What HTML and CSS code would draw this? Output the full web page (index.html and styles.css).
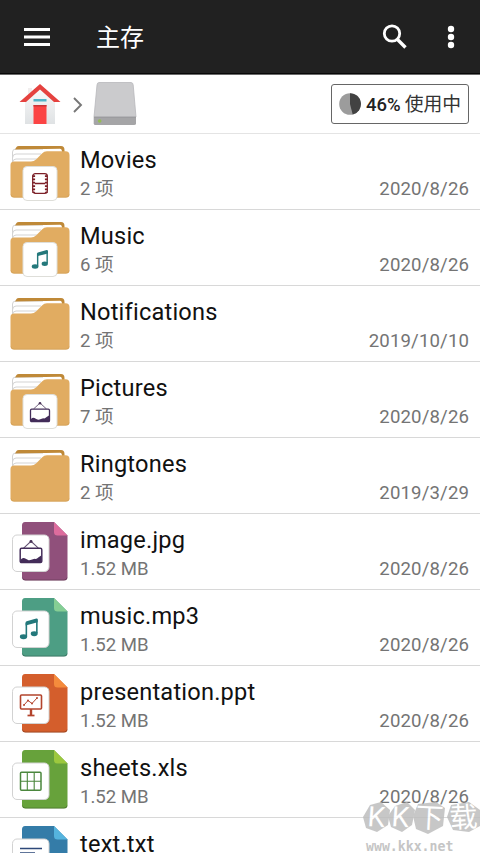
FILE: index.html
```html
<!DOCTYPE html>
<html lang="zh-CN">
<head>
<meta charset="utf-8">
<title>主存</title>
<link rel="stylesheet" href="styles.css">
</head>
<body>
<svg class="defs" width="0" height="0" aria-hidden="true">
  <symbol id="folder" viewBox="0 0 80 76">
    <path d="M14 14H60Q62 14 62 17V35H12V17Q12 14 14 14Z" fill="#fff"/>
    <path d="M12.500 31V18Q12.500 15 16 15H43M12.500 24Q12.500 20 16 20H41M12.500 29Q12.500 25 16 25H37" fill="none" stroke="#d3d3d3"/>
    <path d="M15 15.500 16.500 13Q17 12 19 12H61Q64.500 12 64.500 16V18H62V17Q61.500 14.800 60 14.800Z" fill="#bf8938"/>
    <path d="M10.500 31Q10.500 27.500 14 27.500H31Q34 27.500 36 25.500L42 19.500Q44 17.300 47 17.300H65.500Q69.500 17.300 69.500 21.300V60Q69.500 63.500 66 63.500H14Q10.500 63.500 10.500 60Z" fill="#e1ac61"/>
    <path d="M11 60.500Q11.500 63.200 14 63.200H66Q69 63.200 69.200 60.500" fill="none" stroke="#cf9c52" stroke-width=".6"/>
  </symbol>
  <symbol id="doc" viewBox="0 0 80 76">
    <path d="M25 8H54L67.500 21.500V63Q67.500 66.500 64 66.500H25.500Q22 66.500 22 63V11.500Q22 8 25 8Z" fill="currentColor"/>
    <path d="M22.300 63.500Q22.800 66.100 25.500 66.100H64Q66.800 66.100 67.200 63.500" fill="none" stroke="#000" stroke-opacity=".28" stroke-width=".9"/>
    <rect x="12.500" y="21" width="36.500" height="36.500" rx="4.500" fill="#fff" stroke="#d2d2d2"/>
  </symbol>
  <symbol id="badge" viewBox="0 0 80 76">
    <rect x="23" y="32.500" width="34" height="34" rx="4" fill="#fff" stroke="#deded9"/>
  </symbol>
  <symbol id="film" viewBox="0 0 20 22">
    <rect x="3" y="1.500" width="14" height="19" rx="2.500" fill="none" stroke="#7c2028" stroke-width="1.200"/>
    <path d="M5 11H15" stroke="#7c2028" stroke-width="1.200"/>
    <path d="M4 3V20M16 3V20" stroke="#7c2028" stroke-width="2.600" stroke-dasharray="1.700 1.500"/>
  </symbol>
  <symbol id="note" viewBox="0 0 20 22">
    <path d="M7 18V5M17 2V15" fill="none" stroke="#23787b" stroke-width="1.500"/>
    <path d="M6.300 5Q6.300 4 7.300 3.700L16.500 1Q17.800.800 17.800 2V4.600L6.300 7.600Z" fill="#23787b"/>
    <ellipse cx="4.300" cy="18.400" rx="3.500" ry="2.300" fill="#23787b"/>
    <ellipse cx="14.500" cy="15.500" rx="3.300" ry="2.300" fill="#23787b"/>
  </symbol>
  <symbol id="picture" viewBox="0 0 22 22">
    <path d="M4.500 8 11 2 17.500 8" fill="none" stroke="#625071" stroke-width=".9"/>
    <circle cx="11" cy="2.200" r="1.300" fill="#483257"/>
    <rect x="1.500" y="8.200" width="19" height="12.500" rx="1.200" fill="#fff" stroke="#432c59" stroke-width="1.300"/>
    <path d="M2 18Q3.500 16 5.500 17T8.500 18.500 12 18 15 17.500 18 15.800L20 14.500V20.500H2Z" fill="#432c59"/>
  </symbol>
</svg>

<header class="bar">
  <svg class="menu" viewBox="0 0 26 18"><path d="M0 1.500H26M0 9H26M0 16.500H26" stroke="#fff" stroke-width="2.900"/></svg>
  <h1 class="title">主存</h1>
  <svg class="search" viewBox="0 0 26 26"><circle cx="11" cy="9.500" r="7.700" fill="none" stroke="#fff" stroke-width="2.800"/><path d="M16.500 15.500 24.500 23.500" stroke="#fff" stroke-width="3.300"/></svg>
  <svg class="more" viewBox="0 0 8 24"><g fill="#fff"><circle cx="4" cy="4" r="3.200"/><circle cx="4" cy="12" r="3.200"/><circle cx="4" cy="20" r="3.200"/></g></svg>
</header>

<nav class="crumbs">
  <svg class="home" viewBox="0 0 42 42">
    <defs><linearGradient id="wall" x2="0" y2="1"><stop stop-color="#fafafa"/><stop offset="1" stop-color="#dfe2e4"/></linearGradient></defs>
    <path d="M9 5H13V14H9Z" fill="#f1eeee"/>
    <path d="M6 17 21 4 36 17V41H6Z" fill="url(#wall)"/>
    <path d="M21 1 41.500 19H35L21 6.500 7 19H.5Z" fill="#e5423f"/>
    <path d="M14.500 16H27.500V18.500H14.500Z" fill="#50b5c9"/>
    <path d="M14.500 22H27.500V41H14.500Z" fill="#fb4444"/><path d="M14.500 22H27.500V23.500H14.500Z" fill="#c93537"/>
  </svg>
  <svg class="chevron" viewBox="0 0 10 16"><path d="M1 1 8 8 1 15" fill="none" stroke="#777" stroke-width="1.900"/></svg>
  <svg class="disk" viewBox="0 0 44 44">
    <path d="M6 .500H38Q40 .500 40.200 3L43 35H1L4 3Q4.200.500 6 .500Z" fill="#cbcbcd" stroke="#b8b8bb" stroke-width=".8"/>
    <path d="M.700 35H43V41.500Q43 43 41 43H2.500Q.700 43 .700 41.500Z" fill="#a5a5a7"/><path d="M1 35.200H43" stroke="#98989b"/>
    <circle cx="6.700" cy="39" r="1.800" fill="#94bd54"/>
  </svg>
  <div class="usage">
    <svg class="pie" viewBox="0 0 22 22"><circle cx="11" cy="11" r="10.800" fill="#9c9c9c"/><path d="M11 .2A10.800 10.800 0 0 1 13.700 21.500L11 11Z" fill="#424242"/></svg>
    <span class="percent">46%</span><span class="used">使用中</span>
  </div>
</nav>

<main class="list">
  <div class="row">
    <svg class="icon" viewBox="0 0 80 76"><use href="#folder"/><use href="#badge"/><use href="#film" x="29.500" y="38" width="21" height="23"/></svg>
    <div class="text"><div class="name">Movies</div><div class="meta"><span>2 项</span><span class="date">2020/8/26</span></div></div>
  </div>
  <div class="row">
    <svg class="icon" viewBox="0 0 80 76"><use href="#folder"/><use href="#badge"/><use href="#note" x="31" y="39" width="19" height="21"/></svg>
    <div class="text"><div class="name">Music</div><div class="meta"><span>6 项</span><span class="date">2020/8/26</span></div></div>
  </div>
  <div class="row">
    <svg class="icon" viewBox="0 0 80 76"><use href="#folder"/></svg>
    <div class="text"><div class="name">Notifications</div><div class="meta"><span>2 项</span><span class="date">2019/10/10</span></div></div>
  </div>
  <div class="row">
    <svg class="icon" viewBox="0 0 80 76"><use href="#folder"/><use href="#badge"/><use href="#picture" x="29" y="39" width="22" height="22"/></svg>
    <div class="text"><div class="name">Pictures</div><div class="meta"><span>7 项</span><span class="date">2020/8/26</span></div></div>
  </div>
  <div class="row">
    <svg class="icon" viewBox="0 0 80 76"><use href="#folder"/></svg>
    <div class="text"><div class="name">Ringtones</div><div class="meta"><span>2 项</span><span class="date">2019/3/29</span></div></div>
  </div>
  <div class="row">
    <svg class="icon image" viewBox="0 0 80 76"><use href="#doc"/><path d="M54 8V18Q54 21.500 57.500 21.500H67.500Z" fill="#dd6c9d"/><use href="#picture" x="18.500" y="25" width="25" height="25"/></svg>
    <div class="text"><div class="name">image.jpg</div><div class="meta"><span>1.52 MB</span><span class="date">2020/8/26</span></div></div>
  </div>
  <div class="row">
    <svg class="icon music" viewBox="0 0 80 76"><use href="#doc"/><path d="M54 8V18Q54 21.500 57.500 21.500H67.500Z" fill="#85ce94"/><use href="#note" x="19" y="27" width="21" height="24"/></svg>
    <div class="text"><div class="name">music.mp3</div><div class="meta"><span>1.52 MB</span><span class="date">2020/8/26</span></div></div>
  </div>
  <div class="row">
    <svg class="icon slides" viewBox="0 0 80 76"><use href="#doc"/><path d="M54 8V18Q54 21.500 57.500 21.500H67.500Z" fill="#f58b3c"/><g fill="none" stroke="#b3442d"><rect x="20.500" y="29" width="21" height="14" rx="1" stroke-width="1.600"/><path d="M31 43V49" stroke-width="2.400"/><path d="M27.500 49.500H34.500" stroke-width="1.700"/><path d="M24 39 28 34.500 32 37.500 37 32" stroke-width="1"/></g><g fill="#b3442d"><circle cx="24" cy="39" r="1"/><circle cx="28" cy="34.500" r="1"/><circle cx="32" cy="37.500" r="1"/><circle cx="37" cy="32" r="1"/></g></svg>
    <div class="text"><div class="name">presentation.ppt</div><div class="meta"><span>1.52 MB</span><span class="date">2020/8/26</span></div></div>
  </div>
  <div class="row">
    <svg class="icon sheet" viewBox="0 0 80 76"><use href="#doc"/><path d="M54 8V18Q54 21.500 57.500 21.500H67.500Z" fill="#9cc83e"/><g fill="none" stroke="#4b873d"><rect x="20.500" y="30.300" width="20.500" height="18" rx="1" stroke-width="1.500"/><path d="M20.500 39.300H41M27.300 30V48M34.200 30V48" stroke-width="1.100"/></g></svg>
    <div class="text"><div class="name">sheets.xls</div><div class="meta"><span>1.52 MB</span><span class="date">2020/8/26</span></div></div>
  </div>
  <div class="row">
    <svg class="icon plain" viewBox="0 0 80 76"><use href="#doc"/><path d="M54 8V18Q54 21.500 57.500 21.500H67.500Z" fill="#55b4de"/><path d="M20 30.500H42M20 35H35M20 39.500H42" stroke="#2d4879" stroke-width="1.300"/></svg>
    <div class="text"><div class="name">text.txt</div></div>
  </div>
</main>

<div class="watermark">
  <svg class="mark" viewBox="0 0 117 32">
    <g fill="#bebebe"><path d="M7 3 18 0 27 8 25 23 14 30 3 26 0 15Z"/><path d="M32 4 44 0 52 8 49 23 39 30 28 25 25 14Z"/><path d="M55 2 73 0 82 6 80 24 65 32 53 27 50 14Z"/><path d="M88 3 106 0 117 8V24L106 30 90 28 84 15Z"/></g>
    <text class="brand" transform="translate(4 24) rotate(4)">K</text><text class="brand" transform="translate(28 24) rotate(4)">K</text><text class="brand" transform="translate(52 25) rotate(3)">下</text><text class="brand" transform="translate(87 26) rotate(-3)">载</text>
  </svg>
  <div class="site">www.kkx.net</div>
</div>
</body>
</html>
```

FILE: styles.css
```css
* { box-sizing: border-box; }
body {
  position: relative;
  width: 480px;
  height: 853px;
  margin: 0;
  overflow: hidden;
  background: #fff;
  color: #111;
  font-family: Roboto, "Noto Sans CJK SC", sans-serif;
}
svg { display: block; flex: none; }
.defs { position: absolute; }
.bar {
  display: flex;
  align-items: center;
  height: 75px;
  padding: 0 25px 0 24px;
  background: #212121;
  border-bottom: 1px solid #6a6a6a;
  box-shadow: inset 0 -1px #080808;
}
.menu { width: 26px; height: 18px; }
.title {
  flex: 1;
  margin: 0 0 0 46px;
  padding-top: 2px;
  color: #fff;
  font-size: 24px;
  font-weight: 400;
  line-height: 36px;
}
.search { width: 26px; height: 26px; margin-right: 40px; }
.more { width: 8px; height: 24px; }
.crumbs {
  display: flex;
  align-items: center;
  height: 59px;
  padding: 0 11px 0 19px;
  border-bottom: 1px solid #e4e4e4;
}
.home { width: 42px; height: 42px; }
.chevron { width: 10px; height: 16px; margin: 1px 10px 0 12px; }
.disk { width: 44px; height: 44px; }
.usage {
  display: flex;
  align-items: center;
  width: 138px;
  height: 40px;
  margin: 0 0 0 auto;
  padding-left: 7px;
  border: 1px solid #666;
  border-radius: 3px;
  color: #333;
  font-size: 18px;
  white-space: nowrap;
}
.pie { width: 22px; height: 22px; margin-right: 5px; }
.percent { padding-top: 1px; color: #222; font-weight: 500; font-size: 18.500px; }
.used { margin-left: 4px; padding-top: 1px; font-size: 18.800px; line-height: 24px; }
.row {
  display: flex;
  height: 76px;
  border-bottom: 1px solid #d8d8d8;
}
.icon { width: 80px; height: 76px; }
.text { flex: 1; min-width: 0; padding: 12px 11px 0 0; }
.name { font-size: 23.600px; line-height: 29px; letter-spacing: .2px; }
.meta {
  display: flex;
  justify-content: space-between;
  color: #747474;
  font-size: 18.600px;
  line-height: 29px;
}
.date { letter-spacing: .15px; margin-right: -.15px; }
.image { color: #90507b; }
.music { color: #4d9e84; }
.slides { color: #d45e2c; }
.sheet { color: #67a23b; }
.plain { color: #347ca8; }
.watermark {
  position: absolute;
  right: 0;
  bottom: 0;
  width: 117px;
  height: 51px;
  opacity: .85;
}
.mark { width: 117px; height: 32px; }
.brand {
  fill: #fff;
  font-family: Roboto, "Noto Sans CJK SC", sans-serif;
  font-size: 28px;
  font-weight: 400;
}
.site {
  padding: 5px 0 0 3px;
  color: #bbb;
  font: bold 13.200px/16px "DejaVu Sans Mono", monospace;
}
```
